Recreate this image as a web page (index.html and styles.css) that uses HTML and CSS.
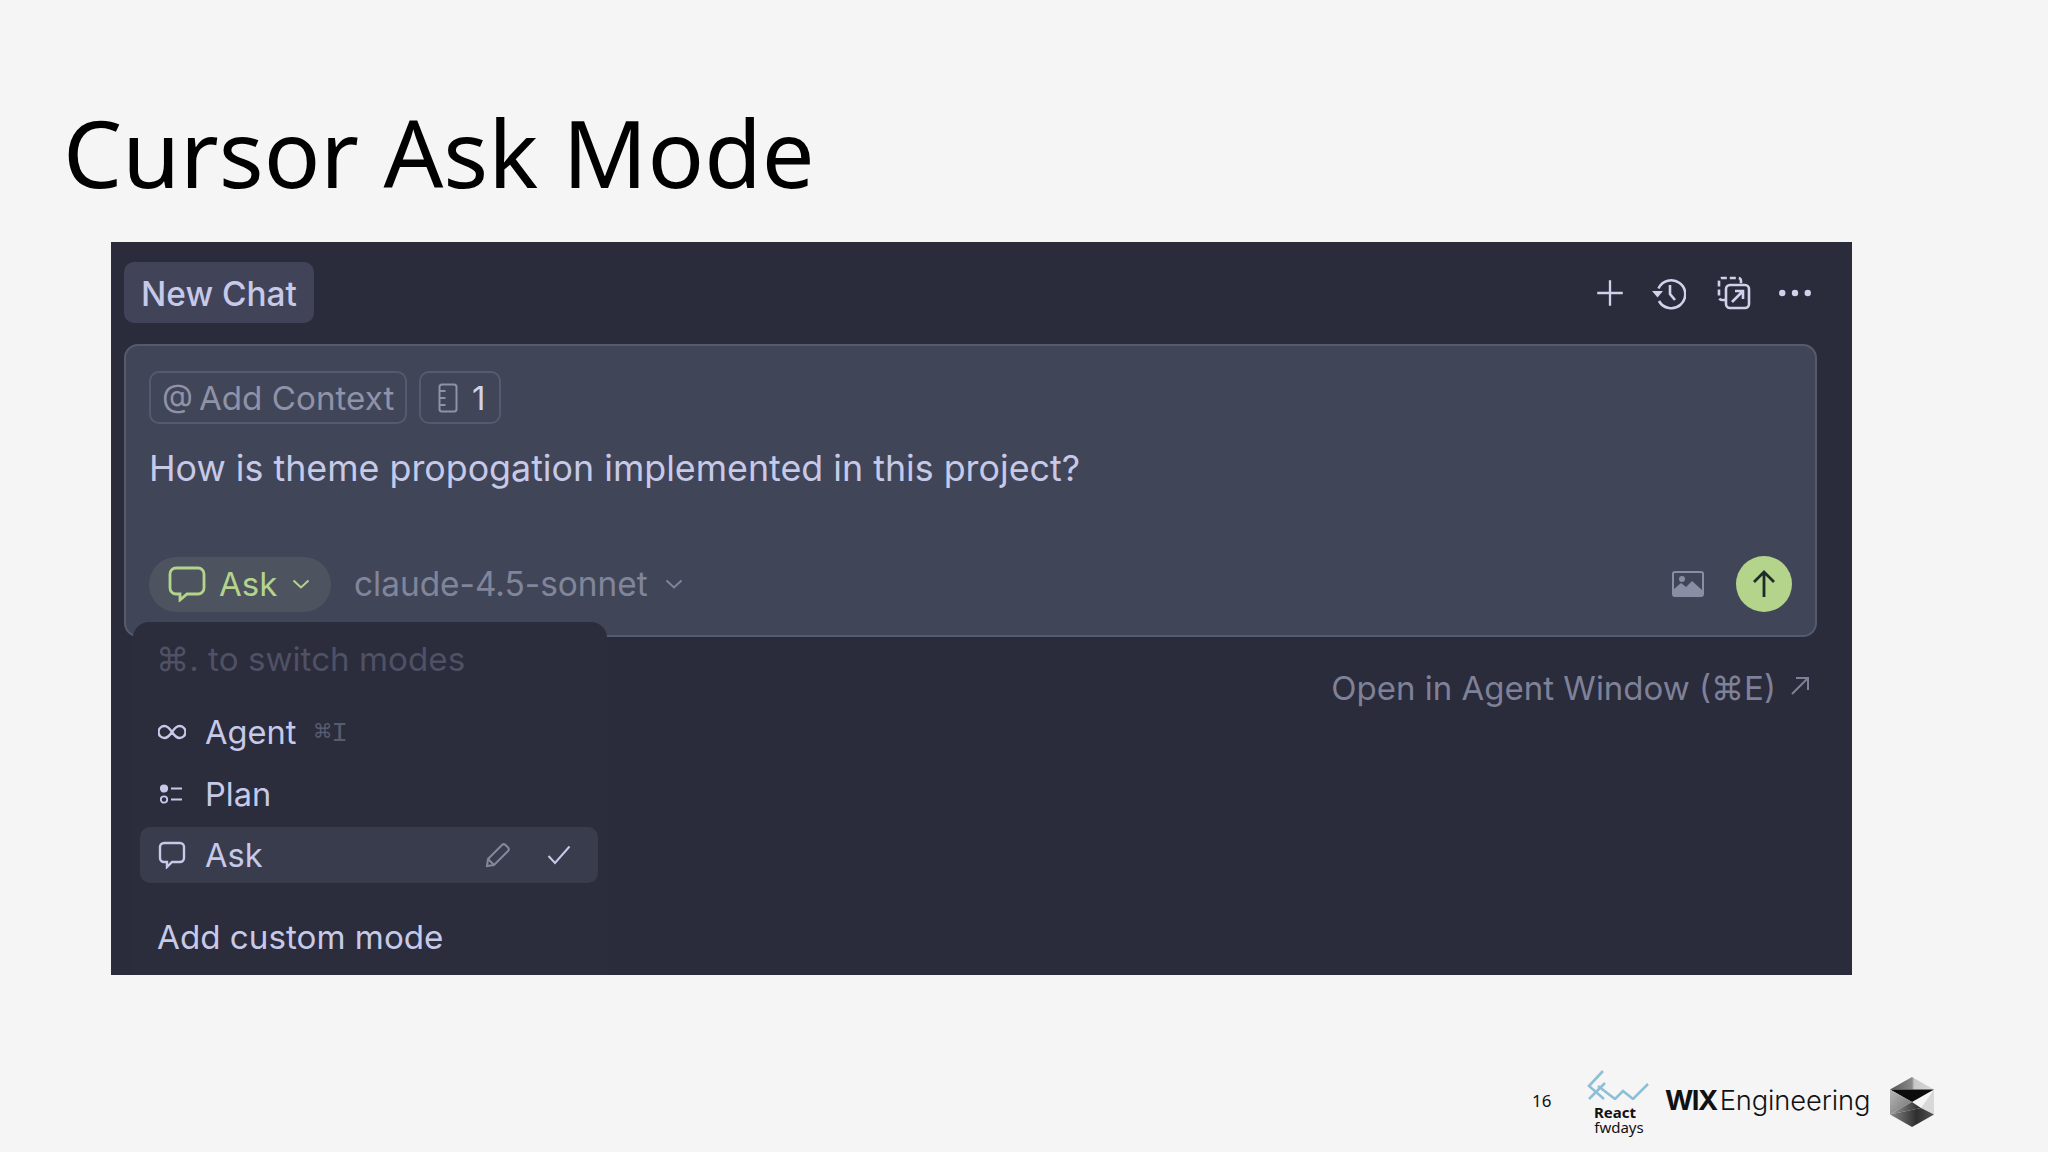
FILE: index.html
```html
<!DOCTYPE html>
<html lang="en">
<head>
<meta charset="utf-8">
<title>Cursor Ask Mode</title>
<link rel="stylesheet" href="styles.css">
</head>
<body>
<main class="slide">
  <h1 class="title">Cursor Ask Mode</h1>
  <section class="panel">
    <header class="topbar">
      <div class="tab">New Chat</div>
      <div class="tools">
        <svg class="tool tool-plus" viewBox="0 0 32 32"><path d="M16 4v24M4 16h24"/></svg>
        <svg class="tool tool-history" viewBox="0 0 34 34"><path d="M6.500 12.500A14 14 0 1 1 7 25"/><path d="M18 9v9l5 6" /><path class="solid" d="M0 15h11l-5.500 6.500z"/></svg>
        <svg class="tool" viewBox="0 0 34 34"><path class="dash" d="M8 24H5a3 3 0 0 1-3-3V5a3 3 0 0 1 3-3h16a3 3 0 0 1 3 3v3"/><rect x="9" y="9" width="23" height="23" rx="4"/><path d="M15 26l11-11M18 15h8v8"/></svg>
        <svg class="tool" viewBox="0 0 32 32"><circle class="solid" cx="4" cy="16" r="3"/><circle class="solid" cx="16" cy="16" r="3"/><circle class="solid" cx="28" cy="16" r="3"/></svg>
      </div>
    </header>

    <div class="composer">
      <div class="chips">
        <div class="chip chip-context"><span class="at">@</span><span>Add Context</span></div>
        <div class="chip chip-rules">
          <svg class="ruler" viewBox="0 0 20 30"><rect x="1.500" y="1.500" width="17" height="27" rx="2.500"/><path d="M1.500 8h6M1.500 15h6M1.500 22h6"/></svg>
          <span class="count">1</span>
        </div>
      </div>
      <p class="prompt">How is theme propogation implemented in this project?</p>
      <div class="controls">
        <div class="mode-pill">
          <svg class="bubble" viewBox="0 0 38 36"><path d="M8 2h22a6 6 0 0 1 6 6v14a6 6 0 0 1-6 6H19l-7 6v-6H8a6 6 0 0 1-6-6V8a6 6 0 0 1 6-6z"/></svg>
          <span>Ask</span>
          <svg class="chev" viewBox="0 0 18 10"><path d="M1.500 1.500L9 8.500l7.500-7"/></svg>
        </div>
        <div class="model">
          <span>claude-4.5-sonnet</span>
          <svg class="chev" viewBox="0 0 18 10"><path d="M1.500 1.500L9 8.500l7.500-7"/></svg>
        </div>
        <svg class="image-icon" viewBox="0 0 32 26"><path fill-rule="evenodd" d="M3 0h26a3 3 0 0 1 3 3v20a3 3 0 0 1-3 3H3a3 3 0 0 1-3-3V3a3 3 0 0 1 3-3zm0 2a1 1 0 0 0-1 1v15l7-6 5 4 6-6 10 9V3a1 1 0 0 0-1-1z"/><circle cx="10" cy="8" r="3"/></svg>
        <div class="send">
          <svg viewBox="0 0 24 30"><path d="M12 28V3M2 13L12 3l10 10"/></svg>
        </div>
      </div>
    </div>

    <div class="agent-link">
      <span>Open in Agent Window (⌘E)</span>
      <svg class="ext" viewBox="0 0 20 20"><path d="M2 18L18 2M6 2h12v12"/></svg>
    </div>

    <div class="menu">
      <div class="menu-hint">⌘. to switch modes</div>
      <div class="menu-list">
        <div class="menu-row">
          <svg class="menu-icon" viewBox="0 0 28 16"><path d="M14 8C11 3.500 9 2 6.500 2a6 6 0 0 0 0 12C9 14 11 12.500 14 8s5-6 7.500-6a6 6 0 0 1 0 12C19 14 17 12.500 14 8z"/></svg>
          <span>Agent</span>
          <span class="shortcut">⌘I</span>
        </div>
        <div class="menu-row">
          <svg class="menu-icon menu-icon-plan" viewBox="0 0 28 28"><circle class="plan-done" cx="6" cy="8.500" r="3.200"/><circle cx="6" cy="19.500" r="3.200"/><path d="M13 8.500h11M13 19.500h11"/></svg>
          <span>Plan</span>
        </div>
        <div class="menu-row menu-row-active">
          <svg class="menu-icon" viewBox="0 0 28 28"><path d="M6 2h16a4 4 0 0 1 4 4v11a4 4 0 0 1-4 4h-8l-5 5v-5H6a4 4 0 0 1-4-4V6a4 4 0 0 1 4-4z"/></svg>
          <span>Ask</span>
          <svg class="pencil" viewBox="0 0 26 26"><path d="M2 24l1-7L17 3a2.500 2.500 0 0 1 3.500 0l2.500 2.500a2.500 2.500 0 0 1 0 3.500L9 23z"/><path d="M3 17l6 6"/></svg>
          <svg class="check" viewBox="0 0 24 20"><path d="M1.500 11l6.500 7L22.500 1.500"/></svg>
        </div>
      </div>
      <div class="menu-add">Add custom mode</div>
    </div>
  </section>

  <footer class="footer">
    <span class="page">16</span>
    <div class="fwdays">
      <svg class="fw-mark" viewBox="0 0 62 30"><path d="M16 1L2 16l15 13M18 13L2 29M11 16l17 13 8-8 10 8L61 14"/></svg>
      <span class="fw-react">React</span>
      <span class="fw-days">fwdays</span>
    </div>
    <div class="wix"><span class="wix-bold">WIX</span><span>Engineering</span></div>
    <svg class="cube" viewBox="0 0 44 50">
      <defs>
        <linearGradient id="cubeTop" x1="0" y1="0" x2="1" y2="0"><stop offset="0" stop-color="#555"/><stop offset="0.5" stop-color="#8a8a8a"/><stop offset="0.55" stop-color="#c8c8c8"/><stop offset="1" stop-color="#d8d8d8"/></linearGradient>
        <linearGradient id="cubeLeft" x1="0" y1="0" x2="1" y2="1"><stop offset="0" stop-color="#b8b8b8"/><stop offset="1" stop-color="#707070"/></linearGradient>
        <linearGradient id="cubeLow" x1="0" y1="0" x2="1" y2="0"><stop offset="0" stop-color="#9a9a9a"/><stop offset="1" stop-color="#2a2a2a"/></linearGradient>
        <linearGradient id="cubeBase" x1="0" y1="0" x2="1" y2="0"><stop offset="0" stop-color="#8a8a8a"/><stop offset="0.6" stop-color="#2e2e2e"/><stop offset="1" stop-color="#555"/></linearGradient>
      </defs>
      <path fill="url(#cubeTop)" d="M22 0L44 12.500H0z"/>
      <path fill="#0c0c0c" d="M0 12.500h44L22 25z"/>
      <path fill="url(#cubeLeft)" d="M0 12.500L22 25 0 37.500z"/>
      <path fill="#d8d8d8" d="M44 12.500L31 31l13 6.500z"/>
      <path fill="url(#cubeLow)" d="M22 25L31 31 0 37.500z"/>
      <path fill="url(#cubeBase)" d="M0 37.500L31 31l13 6.500L22 50z"/>
    </svg>
  </footer>
</main>
</body>
</html>
```
FILE: styles.css
```css
* { box-sizing: border-box; }
html, body { margin: 0; padding: 0; }
body { background: #f5f5f5; font-family: "Inter", "Liberation Sans", sans-serif; }
.slide { width: 2048px; height: 1152px; overflow: hidden; display: flex; flex-direction: column; }
.title { margin: 0; padding: 90px 0 0 63px; height: 242px; font: 400 93.7px/124px "Noto Sans", sans-serif; color: #000; }
.panel { position: relative; flex: none; margin-left: 111px; width: 1741px; height: 733px; background: #2a2b3b; overflow: hidden; display: flex; flex-direction: column; padding: 20px 35px 0 13px; color: #c6c9e8; }

.topbar { display: flex; justify-content: space-between; align-items: center; height: 61px; }
.tab { width: 190px; height: 61px; padding-top: 2px; border-radius: 10px; background: #414458; color: #c6c9e8; font-size: 33.400px; font-weight: 500; display: flex; align-items: center; justify-content: center; }
.tools { display: flex; align-items: center; gap: 27px; padding-right: 5px; }
.tool { width: 34px; height: 34px; fill: none; stroke: #cfd2ea; stroke-width: 2.600; }
.tool .solid { fill: #cfd2ea; stroke: none; }
.tool .dash { stroke-dasharray: 6 3; }
.tool-plus { margin-right: 0; stroke-width: 2.200; }
.tool-history { margin-left: -2px; margin-right: 4px; }

.composer { margin-top: 21px; width: 1693px; height: 293px; background: #414558; border: 2px solid #565a6d; border-radius: 14px; padding: 25px 23px 0; display: flex; flex-direction: column; }
.chips { display: flex; gap: 12px; height: 53px; }
.chip { display: flex; align-items: center; height: 53px; border: 2px solid #565a6e; border-radius: 10px; color: #8f92a8; font-size: 33.200px; }
.chip-context { width: 258px; padding-left: 11px; gap: 6px; }
.at { font-size: 32px; line-height: 40px; margin-top: -4px; }
.chip-rules { width: 82px; padding-left: 17px; gap: 14px; color: #d0d3ee; }
.ruler { width: 20px; height: 30px; fill: none; stroke: #8f92a8; stroke-width: 2; }
.prompt { margin: 21px 0 0; height: 46px; font-size: 35.800px; line-height: 46px; color: #c6c9e8; }
.controls { display: flex; align-items: center; margin-top: 65px; height: 56px; }
.mode-pill { width: 182px; height: 55px; border-radius: 28px; background: #4e5360; color: #b4d48c; font-size: 33px; display: flex; align-items: center; padding-left: 19px; gap: 13px; flex: none; }
.bubble { width: 38px; height: 36px; fill: none; stroke: #b4d48c; stroke-width: 2.800; }
.mode-pill .chev { stroke: #b4d48c; margin-left: 2px; }
.chev { width: 18px; height: 10px; fill: none; stroke: #81859b; stroke-width: 2; }
.model { margin-left: 23px; display: flex; align-items: center; gap: 17px; color: #81859b; font-size: 33.400px; }
.image-icon { margin-left: auto; width: 32px; height: 26px; fill: #8a8ea4; }
.send { margin-left: 32px; width: 56px; height: 56px; border-radius: 50%; background: #b4d48c; display: flex; align-items: center; justify-content: center; }
.send svg { width: 24px; height: 30px; fill: none; stroke: #1f2a2a; stroke-width: 2.800; }

.agent-link { margin-top: 30px; width: 1693px; display: flex; align-items: center; justify-content: flex-end; gap: 14px; padding-right: 7px; color: #7e8197; font-size: 33px; line-height: 42px; }
.ext { width: 20px; height: 20px; fill: none; stroke: #7e8197; stroke-width: 2; margin-top: -4px; }

.menu { position: absolute; left: 22px; top: 380px; width: 474px; height: 353px; background: #2b2c3c; border-radius: 16px 16px 0 0; display: flex; flex-direction: column; padding: 0 9px 0 7px; }
.menu-hint { margin: 16px 0 0 16px; height: 42px; font-size: 33.200px; line-height: 42px; color: #4f5164; }
.menu-list { margin-top: 24px; display: flex; flex-direction: column; }
.menu-row { height: 56px; margin-bottom: 5.500px; display: flex; align-items: center; padding-left: 18px; font-size: 32.600px; color: #c6c9e8; border-radius: 10px; }
.menu-row-active { background: #393c4d; }
.menu-icon { flex: none; width: 28px; height: 28px; margin-right: 19px; fill: none; stroke: #c6c9e8; stroke-width: 2.400; }
.menu-icon-plan { stroke-width: 1.800; }
.plan-done { fill: #c6c9e8; }
.shortcut { margin-left: 18px; font-size: 28px; color: #595c70; font-family: "Liberation Mono", "DejaVu Sans Mono", monospace; }
.pencil { margin-left: auto; width: 26px; height: 26px; fill: none; stroke: #85889c; stroke-width: 2; }
.check { margin: 0 27px 0 36px; width: 24px; height: 20px; fill: none; stroke: #c6c9e8; stroke-width: 2; }
.menu-add { margin: 26px 0 0 17px; font-size: 33.200px; line-height: 44px; color: #c6c9e8; }

.footer { flex: 1; display: flex; align-items: center; padding: 76px 114px 0 1532px; }
.page { font: 400 17px/20px "Noto Sans", sans-serif; color: #111; width: 55px; flex: none; margin-top: -2px; }
.fwdays { width: 78px; flex: none; display: flex; flex-direction: column; align-items: center; color: #111; font-family: "Noto Sans", sans-serif; }
.fw-mark { width: 62px; height: 30px; margin: 0 16px 0 0; fill: none; stroke: #8fbfd6; stroke-width: 2.600; }
.fw-react { font-size: 15px; line-height: 16px; font-weight: 700; margin: 4px 22px 0 0; }
.fw-days { font-size: 15px; line-height: 14px; margin-right: 14px; }
.wix { display: flex; align-items: center; flex: none; font-size: 27.300px; letter-spacing: -0.100px; color: #111; width: 225px; font-weight: 300; font-family: "Inter", sans-serif; margin-top: -2px; }
.wix-bold { font-weight: 700; letter-spacing: -1.500px; margin-right: 3px; }
.cube { width: 44px; height: 50px; flex: none; }
```
